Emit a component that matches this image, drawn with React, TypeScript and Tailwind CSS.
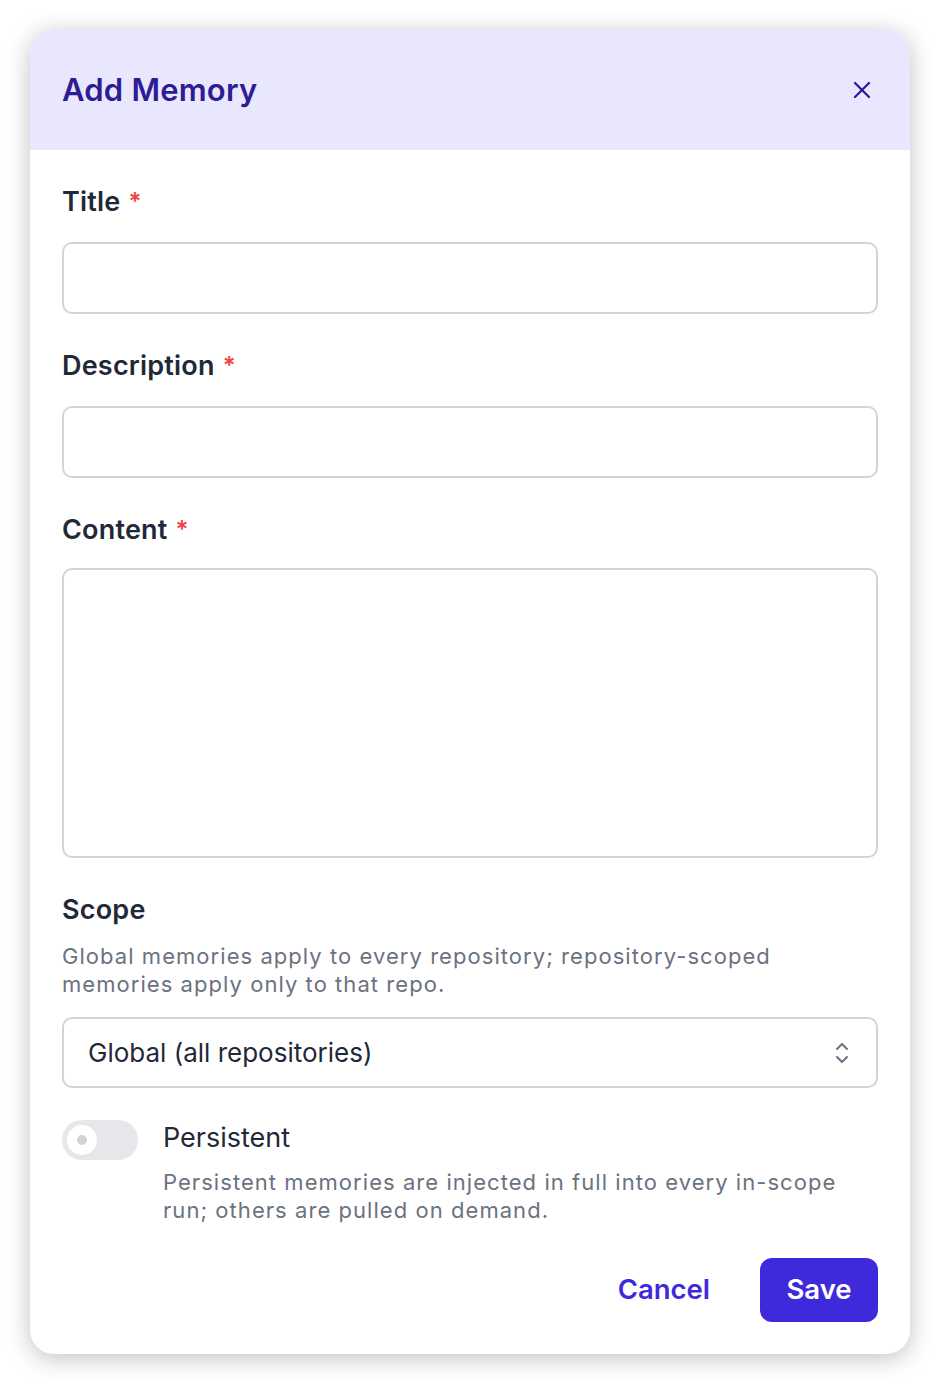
import React from 'react';
import { X } from 'lucide-react';

function Label({ text, required }: { text: string; required?: boolean }) {
  return (
    <div className="flex items-start text-[27px] leading-[32px] font-semibold tracking-[0.2px] text-[#1f2937]">
      {text}
      {required && <span className="ml-[8px] mt-[4px] text-[24px] leading-[24px] text-[#ef4444]">*</span>}
    </div>
  );
}

export default function App() {
  const fields = ['Title', 'Description'];

  return (
    <div className="min-h-[1384px] bg-white p-[30px] font-['Inter',sans-serif]">
      <div className="w-[880px] overflow-hidden rounded-[24px] bg-white shadow-[0_4px_24px_rgba(0,0,0,0.25)]">
        <div className="flex h-[120px] items-center justify-between bg-[#e9e7fe] px-[32px]">
          <h1 className="text-[31px] font-semibold tracking-[0.2px] text-[#2e1c94]">Add Memory</h1>
          <X className="mr-[2px] h-[28px] w-[28px] text-[#2e1c94]" strokeWidth={2} />
        </div>

        <div className="flex flex-col px-[32px] pt-[36px] pb-[32px]">
          {fields.map((f) => (
            <div key={f} className="mb-[36px] flex flex-col gap-[24px]">
              <Label text={f} required />
              <input className="h-[72px] w-full rounded-[10px] border-2 border-[#d1d5db] bg-white px-[24px] text-[24px] outline-none" />
            </div>
          ))}

          <div className="mb-[36px] flex flex-col gap-[22px]">
            <Label text="Content" required />
            <textarea className="h-[290px] w-full resize-none rounded-[10px] border-2 border-[#d1d5db] bg-white px-[24px] py-[16px] text-[24px] outline-none" />
          </div>

          <Label text="Scope" />
          <p className="mt-[16px] max-w-[770px] text-[22px] leading-[28px] tracking-[1.05px] text-[#6b7280]">
            Global memories apply to every repository; repository-scoped memories apply only to that repo.
          </p>
          <div className="mt-[19px] flex h-[71px] items-center justify-between rounded-[10px] border-2 border-[#d1d5db] px-[24px]">
            <span className="text-[26px] text-[#1f2937]">Global (all repositories)</span>
            <svg width="20" height="26" viewBox="0 0 20 26" fill="none" stroke="#6b7280" strokeWidth="2" strokeLinecap="round" strokeLinejoin="round">
              <path d="M5 9l5-5 5 5" />
              <path d="M5 17l5 5 5-5" />
            </svg>
          </div>

          <div className="mt-[32px] flex gap-[25px]">
            <div className="relative h-[40px] w-[76px] shrink-0 rounded-full bg-[#e5e7eb]">
              <div className="absolute left-[5px] top-[5px] flex h-[30px] w-[30px] items-center justify-center rounded-full bg-white">
                <div className="h-[10px] w-[10px] rounded-full bg-[#d1d5db]" />
              </div>
            </div>
            <div className="flex flex-col">
              <span className="text-[27px] leading-[36px] text-[#1f2937]">Persistent</span>
              <p className="mt-[12px] max-w-[690px] text-[22px] leading-[28px] tracking-[1.05px] text-[#6b7280]">
                Persistent memories are injected in full into every in-scope run; others are pulled on demand.
              </p>
            </div>
          </div>

          <div className="mt-[34px] flex items-center justify-end gap-[50px]">
            <button className="text-[27.5px] font-semibold text-[#3f2adb]">Cancel</button>
            <button className="h-[64px] w-[118px] rounded-[12px] bg-[#3f2adb] text-[27.5px] font-semibold text-white">Save</button>
          </div>
        </div>
      </div>
    </div>
  );
}
